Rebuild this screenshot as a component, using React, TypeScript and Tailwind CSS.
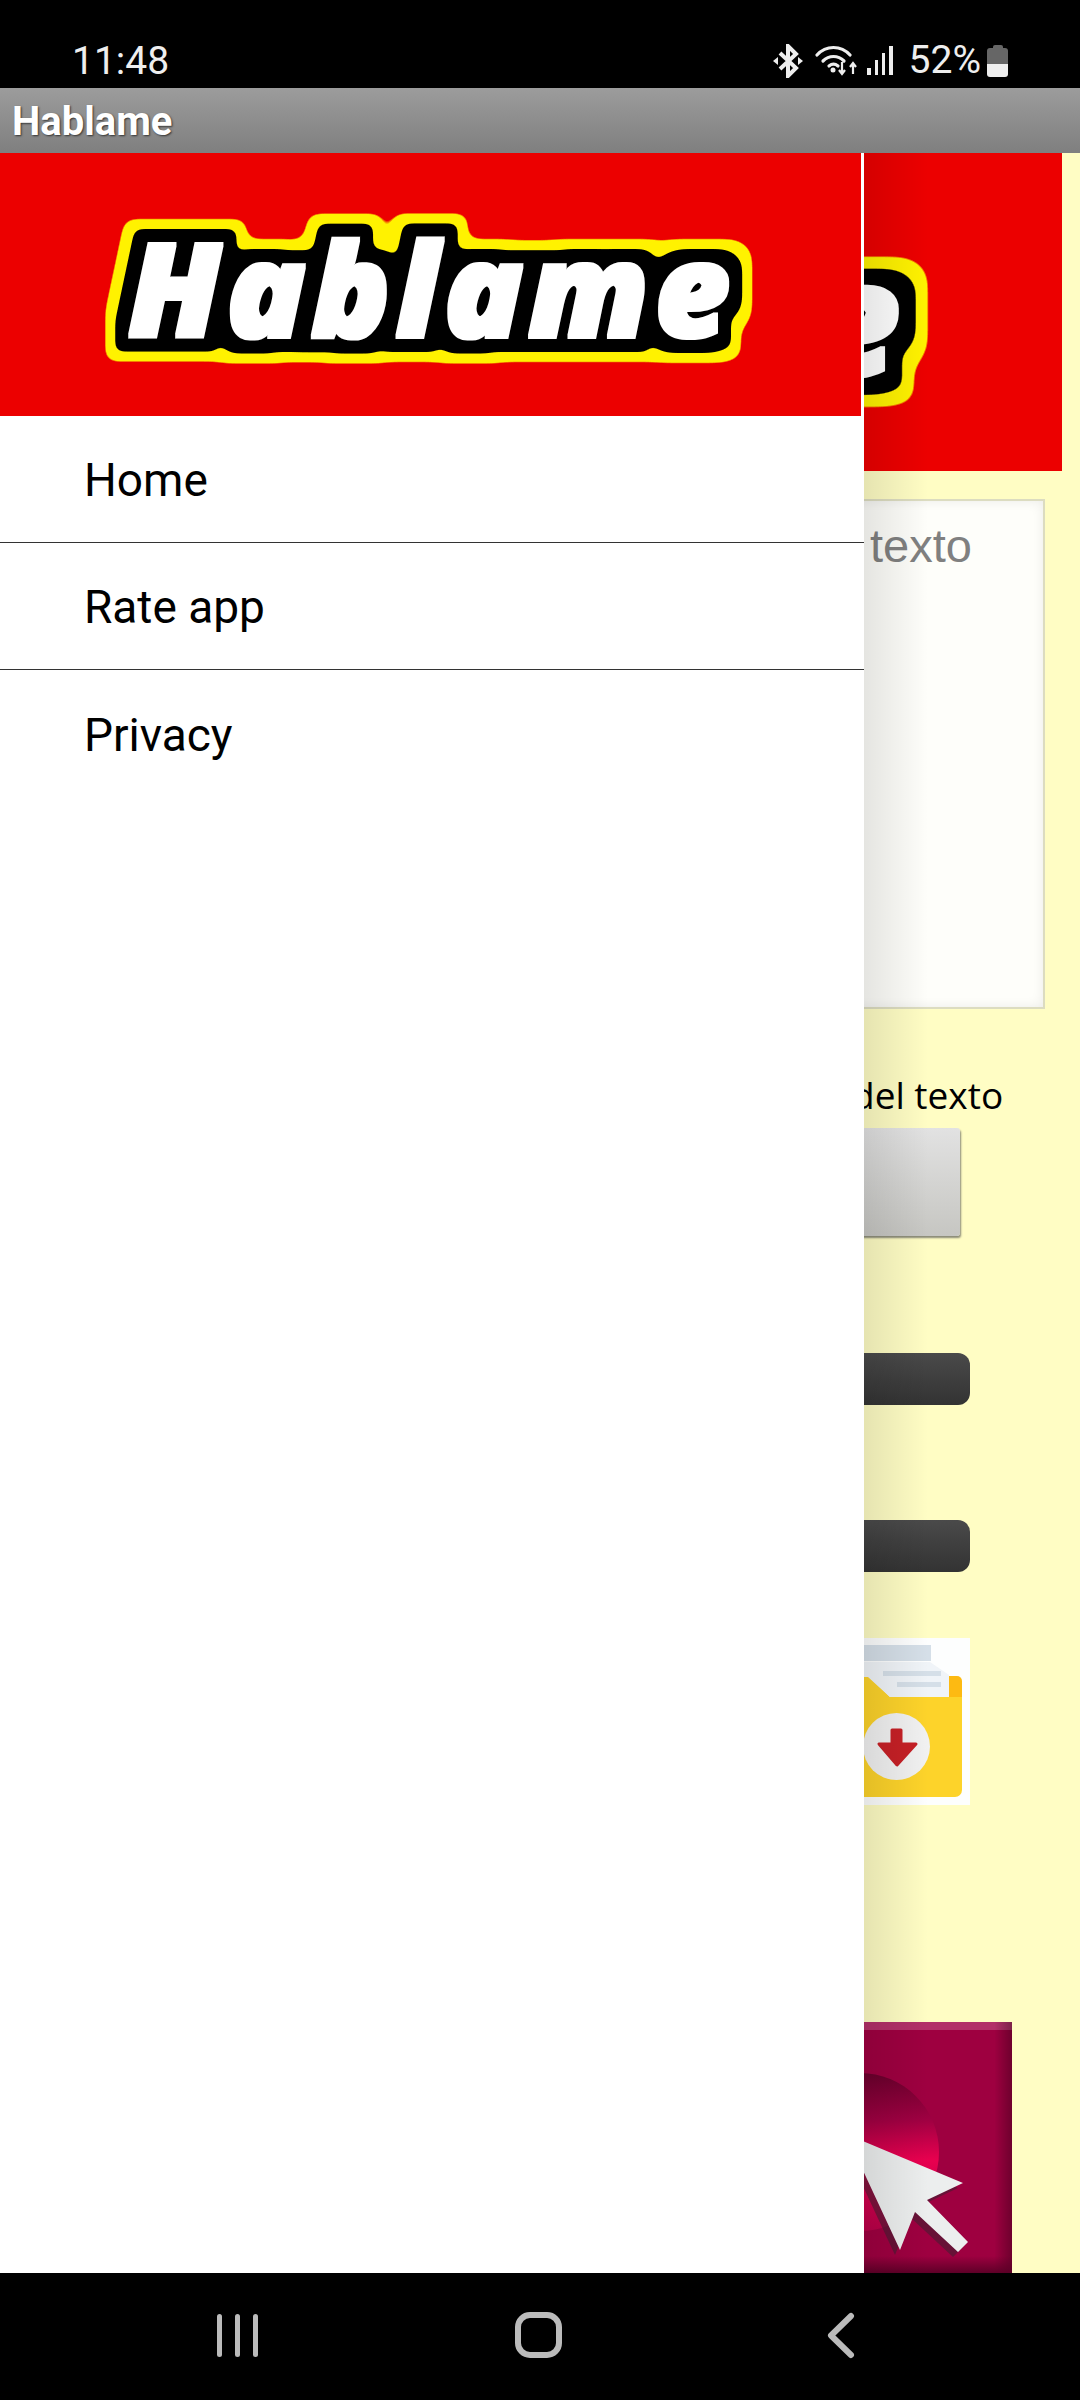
import React from 'react';

const roboto = "font-['Roboto',sans-serif]";

// banner art, stretched to whatever box it sits in
const Logo: React.FC = () => (
    <svg viewBox="0 0 861 263" preserveAspectRatio="none" className="block w-full h-full">
        <defs>
            <filter id="logoOutline" x="-10%" y="-40%" width="120%" height="180%" colorInterpolationFilters="sRGB">
                <feMorphology in="SourceAlpha" operator="dilate" radius="1.500" result="fat" />
                <feMorphology in="SourceAlpha" operator="dilate" radius="15" />
                <feGaussianBlur stdDeviation="5" />
                <feComponentTransfer result="blackMask">
                    <feFuncA type="linear" slope="12" intercept="-5.500" />
                </feComponentTransfer>
                <feMorphology in="SourceAlpha" operator="dilate" radius="25" />
                <feGaussianBlur stdDeviation="7" />
                <feComponentTransfer result="yellowMask">
                    <feFuncA type="linear" slope="12" intercept="-5.500" />
                </feComponentTransfer>
                <feFlood floodColor="#fff200" />
                <feComposite in2="yellowMask" operator="in" result="yellow" />
                <feFlood floodColor="#000" />
                <feComposite in2="blackMask" operator="in" result="black" />
                <feFlood floodColor="#fff" />
                <feComposite in2="fat" operator="in" result="white" />
                <feMerge>
                    <feMergeNode in="yellow" />
                    <feMergeNode in="black" />
                    <feMergeNode in="white" />
                </feMerge>
            </filter>
        </defs>
        <rect width="861" height="263" fill="#ec0000" />
        <text
            x="128"
            y="184"
            fontFamily="'Open Sans', sans-serif"
            fontWeight="800"
            fontStyle="italic"
            fontSize="130"
            textLength="602"
            lengthAdjust="spacing"
            fill="#fff"
            filter="url(#logoOutline)"
        >
            Hablame
        </text>
    </svg>
);

const StatusIcons: React.FC = () => (
    <div className="flex items-center">
        {/* bluetooth */}
        <svg width="30" height="34" viewBox="0 0 30 34" fill="none" stroke="#eee" strokeWidth="4" className="mr-[12px]">
            <path d="M7 9l16 15-8 8V2l8 8L7 25" />
            <path d="M0 17l5-4v8zM30 17l-5-4v8z" fill="#eee" stroke="none" />
        </svg>
        {/* wifi with data arrows */}
        <svg width="44" height="32" viewBox="0 0 44 32" fill="none" stroke="#eee" strokeWidth="3.2" strokeLinecap="round" className="mr-[8px]">
            <path d="M2 10C11 0 26 0 35 10" />
            <path d="M8 16c6-6 15-6 21 0" />
            <path d="M14 21c3-2.500 6-2.500 9 0" />
            <circle cx="18" cy="25" r="2.500" fill="#eee" stroke="none" />
            <path d="M27 17v11M24 25l3 4 3-4M38 29V19M35 22l3-4 3 4" strokeWidth="2.200" strokeLinecap="butt" />
        </svg>
        {/* signal bars */}
        <div className="flex items-end gap-[4px] h-[29px] mr-[16px]">
            <div className="w-[4px] h-[7px] bg-[#eee]" />
            <div className="w-[3px] h-[15px] bg-[#eee]" />
            <div className="w-[3px] h-[22px] bg-[#eee]" />
            <div className="w-[4px] h-[29px] bg-[#eee]" />
        </div>
        <span className="text-[39px] leading-none text-[#eee] mr-[6px]">52%</span>
        {/* battery */}
        <div className="flex flex-col items-center">
            <div className="w-[10px] h-[3px] bg-[#666] rounded-t-[2px]" />
            <div className="w-[21px] h-[29px] rounded-[3px] overflow-hidden flex flex-col">
                <div className="h-[16px] bg-[#666]" />
                <div className="flex-1 bg-[#eee]" />
            </div>
        </div>
    </div>
);

const FolderArt: React.FC = () => (
    <svg width="164" height="167" viewBox="0 0 164 167" className="block">
        <rect width="164" height="167" fill="#fdfefe" />
        <rect x="0" y="7" width="125" height="16" fill="#d5dfe8" />
        <path d="M143 38h8a5 5 0 0 1 5 5v16h-13z" fill="#fdba12" />
        <path d="M0 38H62L84 59H156V152a7 7 0 0 1-7 7H0z" fill="#fdd32a" />
        <path d="M0 24H124L143 37V59H84L62 39H0z" fill="#f0f4f8" />
        <rect x="77" y="33" width="58" height="5" fill="#d5dfe8" />
        <rect x="91" y="44" width="44" height="5" fill="#d5dfe8" />
        <circle cx="90.500" cy="108.500" r="33.500" fill="#f1f1f1" />
        <path d="M86 92H95V106H110L91 127 73 106H86z" fill="#c62026" strokeLinejoin="round" stroke="#c62026" strokeWidth="3" />
    </svg>
);

const CursorArt: React.FC = () => (
    <svg width="252" height="270" viewBox="760 2022 252 270" className="block">
        <defs>
            <linearGradient id="rim" x1="0" y1="0" x2="0" y2="1">
                <stop offset="0" stopColor="#6a002c" />
                <stop offset="0.3" stopColor="#a00042" />
                <stop offset="0.55" stopColor="#e8004f" />
                <stop offset="1" stopColor="#b80048" />
            </linearGradient>
            <linearGradient id="side" x1="0" y1="0" x2="1" y2="0">
                <stop offset="0.93" stopColor="#000" stopOpacity="0" />
                <stop offset="1" stopColor="#000" stopOpacity="0.3" />
            </linearGradient>
            <linearGradient id="foot" x1="0" y1="0" x2="0" y2="1">
                <stop offset="0" stopColor="#5a0026" stopOpacity="0" />
                <stop offset="1" stopColor="#5a0026" />
            </linearGradient>
        </defs>
        <rect x="760" y="2022" width="252" height="270" fill="#9e0040" />
        <rect x="760" y="2022" width="252" height="8" fill="#b23068" />
        <circle cx="860" cy="2152" r="79" fill="url(#rim)" />
        <rect x="760" y="2022" width="252" height="270" fill="url(#side)" />
        <rect x="760" y="2256" width="252" height="18" fill="url(#foot)" />
        <path d="M846 2134L963 2183 927 2200 968 2242 958 2252 915 2212 900 2250z" fill="#3a2030" opacity="0.55" transform="translate(-5 5)" />
        <path d="M846 2134L963 2183 927 2200 968 2242 958 2252 915 2212 900 2250z" fill="#eceeee" />
    </svg>
);

export default function App() {
    return (
        <div className={`w-[1080px] h-[2400px] flex flex-col overflow-hidden bg-black ${roboto}`}>
            <div className="h-[88px] bg-black flex items-start justify-between pl-[72px] pr-[72px] pt-[42px]">
                <span className="text-[39px] leading-none text-[#eee]">11:48</span>
                <div className="-mt-[1px]">
                    <StatusIcons />
                </div>
            </div>

            <div className="h-[65px] px-[12px] pt-[2px] flex items-center bg-linear-to-b from-[#9c9c9c] to-[#7f7f7f]">
                <span className="text-[40px] font-bold leading-none text-white [text-shadow:1px_1px_2px_#333]">Hablame</span>
            </div>

            <div className="relative flex-1 overflow-hidden bg-[#fffdc4]">
                {/* app page behind the drawer */}
                <div className="flex flex-col items-start">
                    <div className="w-[1062px] h-[318px]">
                        <Logo />
                    </div>
                    <div className="mt-[28px] ml-[35px] w-[1010px] h-[510px] bg-[#fefefa] border-2 border-[#dcdcc0] shadow-[inset_0_0_12px_rgba(0,0,0,0.08)] pl-[833px] pt-[21px]">
                        <span className="font-['Liberation_Sans',sans-serif] text-[47px] leading-none text-[#808080]">texto</span>
                    </div>
                    <div className="mt-[61px] ml-[852px] font-['Open_Sans',sans-serif] text-[37px] leading-[50px] text-black">del texto</div>
                    <div className="mt-[8px] ml-[35px] w-[925px] h-[108px] rounded-[3px] bg-linear-to-b from-[#e2e2e2] to-[#c6c6c2] shadow-[1px_2px_2px_#8a8a78]" />
                    <div className="mt-[117px] ml-[35px] w-[935px] h-[52px] rounded-[12px] bg-linear-to-b from-[#4a4a4a] to-[#333]" />
                    <div className="mt-[115px] ml-[35px] w-[935px] h-[52px] rounded-[12px] bg-linear-to-b from-[#4a4a4a] to-[#333]" />
                    <div className="mt-[66px] ml-[806px]">
                        <FolderArt />
                    </div>
                    <div className="mt-[217px] ml-[760px]">
                        <CursorArt />
                    </div>
                </div>

                {/* drawer edge shadow */}
                <div className="absolute left-[864px] top-0 bottom-0 w-[64px] bg-linear-to-r from-black/10 to-transparent" />

                {/* navigation drawer */}
                <div className="absolute left-0 top-0 bottom-0 w-[864px] bg-white">
                    <div className="w-[861px] h-[263px]">
                        <Logo />
                    </div>
                    {['Home', 'Rate app', 'Privacy'].map((item, index) => (
                        <div
                            key={item}
                            className={`h-[127px] pl-[84px] pt-[3px] flex items-center text-[46px] text-black ${index < 2 ? 'border-b border-[#333]' : ''}`}
                        >
                            {item}
                        </div>
                    ))}
                </div>
            </div>

            <div className="h-[127px] bg-black flex items-start">
                {/* recents, home, back */}
                <div className="ml-[217px] mt-[41px] flex gap-[13px]">
                    <div className="w-[5px] h-[43px] rounded-full bg-[#bbb]" />
                    <div className="w-[5px] h-[43px] rounded-full bg-[#bbb]" />
                    <div className="w-[5px] h-[43px] rounded-full bg-[#bbb]" />
                </div>
                <div className="ml-[257px] mt-[39px] w-[47px] h-[46px] rounded-[15px] border-[6px] border-[#bbb]" />
                <svg width="30" height="47" viewBox="0 0 30 47" fill="none" stroke="#bbb" strokeWidth="6" strokeLinecap="round" strokeLinejoin="round" className="ml-[264px] mt-[39px]">
                    <path d="M25 4L5 23.500 25 43" />
                </svg>
            </div>
        </div>
    );
}
